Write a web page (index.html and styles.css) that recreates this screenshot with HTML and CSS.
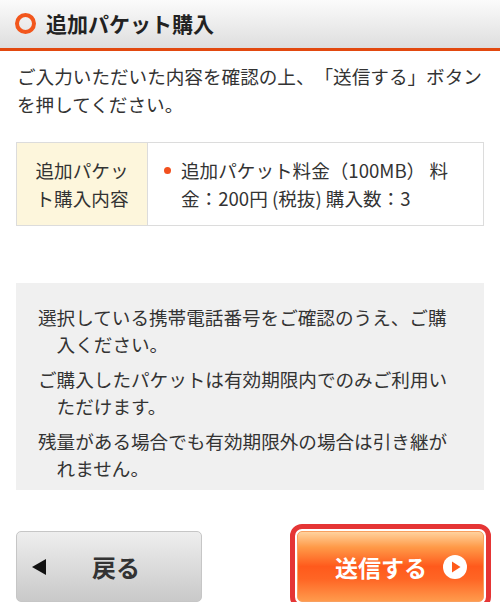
FILE: index.html
```html
<!DOCTYPE html>
<html lang="ja">
<head>
<meta charset="utf-8">
<link rel="stylesheet" href="styles.css">
</head>
<body>
<header class="page-header">
  <span class="ring"></span>
  <h1 class="title">追加パケット購入</h1>
</header>
<main class="content">
  <p class="intro">ご入力いただいた内容を確認の上、「送信する」ボタンを押してください。</p>
  <table class="summary">
    <tr>
      <th class="summary-label">追加パケット購入内容</th>
      <td class="summary-value">
        <ul class="dot-list">
          <li>追加パケット料金（100MB） 料金：200円 (税抜) 購入数：3</li>
        </ul>
      </td>
    </tr>
  </table>
  <div class="notes">
    <p class="note">選択している携帯電話番号をご確認のうえ、ご購入ください。</p>
    <p class="note">ご購入したパケットは有効期限内でのみご利用いただけます。</p>
    <p class="note">残量がある場合でも有効期限外の場合は引き継がれません。</p>
  </div>
  <div class="actions">
    <button class="btn btn-back"><span class="tri-left"></span><span class="back-label">戻る</span></button>
    <button class="btn btn-submit"><span class="submit-label">送信する</span>
      <svg class="play" width="24" height="24" viewBox="0 0 24 24"><circle cx="12" cy="12" r="12" fill="#fff"/><path d="M9 6.5 L17.5 12 L9 17.5 Z" fill="#ff5a1a"/></svg>
    </button>
  </div>
</main>
</body>
</html>
```
FILE: styles.css
```css
html, body {
  margin: 0;
  padding: 0;
  background: #fff;
}
body {
  width: 500px;
  font-family: "Noto Sans CJK JP", "Noto Sans", sans-serif;
  color: #333;
  text-spacing-trim: space-all;
}
.page-header {
  height: 48px;
  display: flex;
  align-items: center;
  padding-left: 15px;
  background: linear-gradient(#fbfbfb, #dedede);
  border-bottom: 3px solid #e2490f;
}
.ring {
  width: 13px;
  height: 13px;
  border: 4px solid #f2561c;
  border-radius: 50%;
  margin-top: -2px;
}
.title {
  margin: 0 0 0 10px;
  font-size: 21px;
  font-weight: bold;
  color: #222;
  line-height: 1;
  margin-top: -2px;
}
.content {
  padding: 0 16px;
}
.intro {
  margin: 11px 0 0 1px;
  font-size: 18.6px;
  line-height: 28px;
}
.summary {
  width: 100%;
  margin-top: 24px;
  border-collapse: collapse;
  border: 1px solid #dcdcdc;
  font-size: 18.6px;
  line-height: 28px;
}
.summary-label {
  width: 110px;
  padding: 13px 10px;
  background: #fdf6dc;
  border-right: 1px solid #dcdcdc;
  font-weight: normal;
  text-align: center;
  vertical-align: middle;
}
.summary-value {
  padding: 13px 12px 13px 14px;
  vertical-align: middle;
}
.dot-list {
  list-style: none;
  margin: 0;
  padding: 0 0 0 19px;
  position: relative;
}
.dot-list li::before {
  content: "";
  position: absolute;
  left: 2px;
  top: 11px;
  width: 7px;
  height: 7px;
  border-radius: 50%;
  background: #f2501e;
}
.notes {
  margin-top: 57px;
  background: #f0f0f0;
  padding: 20px 24px 0 22px;
  height: 187px;
}
.note {
  margin: 0 0 8px 0;
  font-size: 18.6px;
  line-height: 27px;
  padding-left: 18.6px;
  text-indent: -18.6px;
}
.actions {
  margin-top: 41px;
  display: flex;
  justify-content: space-between;
}
.btn {
  height: 71px;
  border-radius: 5px;
  font-family: inherit;
  font-weight: bold;
  display: flex;
  align-items: center;
  padding: 0;
  cursor: pointer;
}
.btn-back {
  width: 186px;
  background: linear-gradient(#eeeeee, #c9c9c9);
  border: 1px solid #c6c6c6;
  padding-left: 15px;
}
.tri-left {
  width: 0;
  height: 0;
  border-top: 8px solid transparent;
  border-bottom: 8px solid transparent;
  border-right: 14px solid #111;
}
.back-label {
  margin-left: 46px;
  font-size: 24px;
  color: #333;
}
.btn-submit {
  width: 187px;
  border: 1px solid #f8a060;
  background: linear-gradient(#ffd29e 0%, #ff9a48 22%, #ff5a1c 50%, #ff6524 68%, #ff9a4c 100%);
  outline: 5px solid #e53535;
  outline-offset: 2px;
  padding-left: 37px;
}
.submit-label {
  font-size: 23px;
  color: #fff;
  letter-spacing: 0;
}
.play {
  margin-left: 16px;
}
```
